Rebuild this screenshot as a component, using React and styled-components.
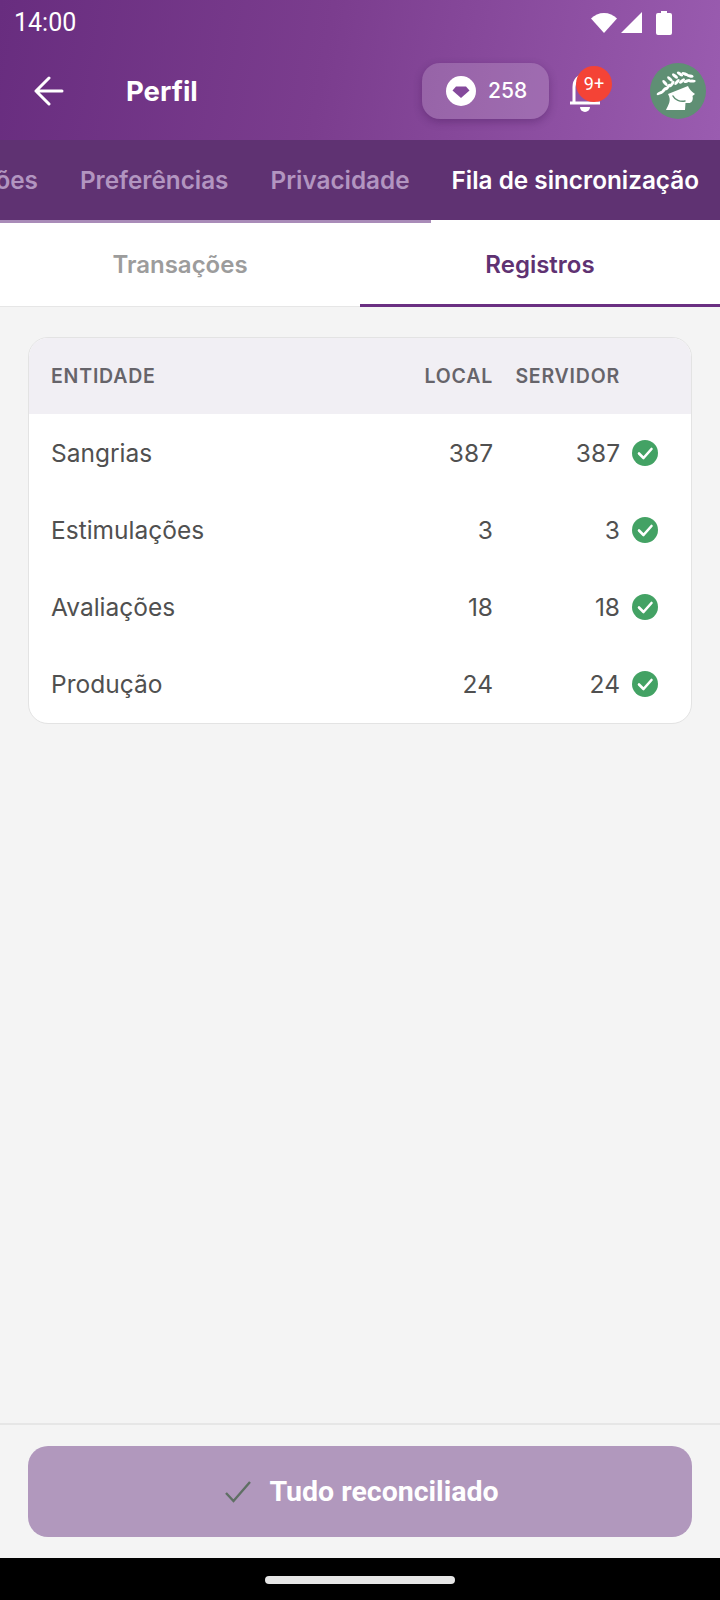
import React from 'react';
import styled, { createGlobalStyle } from 'styled-components';

const GlobalStyle = createGlobalStyle`
  html, body { margin: 0; padding: 0; background: #f4f4f4; }
  * { box-sizing: border-box; }
`;

const mainFont = `Inter, "Noto Sans", sans-serif`;

const Page = styled.div`
  width: 720px;
  height: 1600px;
  display: flex;
  flex-direction: column;
  background: #f4f4f4;
  font-family: ${mainFont};
  overflow: hidden;
`;

const TopArea = styled.header`
  height: 140px;
  background: linear-gradient(100deg, #682d7f 0%, #7b3d8e 45%, #9a5cb0 100%);
  display: flex;
  flex-direction: column;
`;

const StatusBar = styled.div`
  height: 45px;
  padding: 0 48px 0 14px;
  display: flex;
  align-items: center;
  color: #fff;
  font: 400 25px Roboto, sans-serif;
`;

const StatusIcons = styled.div`
  margin-left: auto;
  display: flex;
  align-items: center;
  gap: 3px;
`;

const AppBar = styled.div`
  flex: 1;
  display: flex;
  align-items: center;
  padding: 0 14px 4px 34px;
`;

const Title = styled.h1`
  margin: 0 0 0 62px;
  font-size: 27.500px;
  font-weight: 700;
  color: #fff;
`;

const Points = styled.div`
  margin-left: auto;
  width: 127px;
  height: 56px;
  border-radius: 18px;
  background: rgba(255, 255, 255, 0.17);
  box-shadow: 0 3px 8px rgba(50, 10, 70, 0.3);
  display: flex;
  align-items: center;
  gap: 12px;
  padding-left: 24px;
  color: #fff;
  font-size: 21px;
  font-weight: 500;
`;

const BellWrap = styled.div`
  position: relative;
  width: 32px;
  height: 40px;
  margin-left: 20px;
  margin-right: 1px;
  margin-top: 2px;
`;

const Badge = styled.span`
  position: absolute;
  left: 7px;
  top: -6px;
  width: 36px;
  height: 36px;
  border-radius: 50%;
  background: #f44336;
  color: #fff;
  font: 400 18px Roboto, sans-serif;
  display: flex;
  align-items: center;
  justify-content: center;
`;

const Avatar = styled.div`
  width: 56px;
  height: 56px;
  margin-left: 48px;
  border-radius: 50%;
  background: #5f8f74;
  overflow: hidden;
`;

const TabBar = styled.nav`
  height: 83px;
  background: #5f3272;
  display: flex;
  justify-content: flex-end;
  overflow: hidden;
`;

const TabItem = styled.div`
  flex: none;
  padding: 0 21px;
  display: flex;
  align-items: center;
  font-size: 24.300px;
  font-weight: 600;
  white-space: nowrap;
  color: ${p => (p.$active ? '#fff' : '#b295c0')};
  border-bottom: 3px solid ${p => (p.$active ? '#fff' : '#a98bb8')};
`;

const SubTabs = styled.div`
  height: 84px;
  background: #fff;
  display: grid;
  grid-template-columns: 1fr 1fr;
  border-bottom: 1px solid #e6e6e6;
`;

const SubTab = styled.div`
  display: flex;
  align-items: center;
  justify-content: center;
  padding-top: 2px;
  font-size: 24px;
  font-weight: 600;
  color: ${p => (p.$active ? '#5f3272' : '#9c9c9c')};
  border-bottom: 3px solid ${p => (p.$active ? '#6a2f82' : 'transparent')};
  margin-bottom: -1px;
`;

const Content = styled.main`
  flex: 1;
  padding: 30px 28px 0;
`;

const Card = styled.section`
  border: 1px solid #e3e3e3;
  border-radius: 20px;
  background: #fff;
  overflow: hidden;
  padding-bottom: 1px;
`;

const Row = styled.div`
  height: ${p => (p.$head ? '76px' : '77px')};
  display: grid;
  grid-template-columns: 1fr 90px 127px 38px;
  align-items: center;
  padding: 0 33px 0 22px;
  background: ${p => (p.$head ? '#f1eff4' : 'transparent')};
  color: ${p => (p.$head ? '#66646a' : '#505050')};
  font-size: ${p => (p.$head ? '19.500px' : '24.500px')};
  font-weight: ${p => (p.$head ? 600 : 400)};
  letter-spacing: ${p => (p.$head ? '0.8px' : '0')};
`;

const Num = styled.span`
  text-align: right;
`;

const CheckCell = styled.span`
  display: flex;
  justify-content: flex-end;
`;

const Footer = styled.footer`
  height: 135px;
  border-top: 2px solid #e6e6e6;
  padding: 21px 28px 0;
`;

const DoneButton = styled.button`
  width: 100%;
  height: 91px;
  border: none;
  border-radius: 20px;
  padding: 0 0 0 4px;
  background: #b198bd;
  color: #fff;
  font: 700 28.500px Roboto, sans-serif;
  display: flex;
  align-items: center;
  justify-content: center;
  gap: 18px;
`;

const NavBar = styled.div`
  height: 42px;
  background: #000;
  display: flex;
  justify-content: center;
  padding-top: 18px;
`;

const HomePill = styled.div`
  width: 190px;
  height: 8px;
  border-radius: 4px;
  background: #e6e6e6;
`;

const BatteryIcon = styled.svg`
  margin-left: 10px;
`;

const Wifi = () => (
  <svg width="28" height="22" viewBox="0 0 28 22">
    <path d="M1 6.500C4.500 3 9 1 14 1s9.500 2 13 5.500L14 21z" fill="#fff" />
  </svg>
);

const Signal = () => (
  <svg width="22" height="22" viewBox="0 0 22 22">
    <path d="M21 0v21H0z" fill="#fff" />
  </svg>
);

const Battery = () => (
  <BatteryIcon width="16" height="24" viewBox="0 0 16 24">
    <path d="M5 0h6v2h3a2 2 0 0 1 2 2v18a2 2 0 0 1-2 2H2a2 2 0 0 1-2-2V4a2 2 0 0 1 2-2h3z" fill="#fff" />
  </BatteryIcon>
);

const BackArrow = () => (
  <svg width="30" height="30" viewBox="0 0 30 30" fill="none" stroke="#fff" strokeWidth="3" strokeLinecap="round" strokeLinejoin="round">
    <path d="M28 15H2M15 2L2 15l13 13" />
  </svg>
);

const Gem = () => (
  <svg width="30" height="30" viewBox="0 0 30 30">
    <circle cx="15" cy="15" r="15" fill="#fff" />
    <path d="M10 10.500h10l3.500 4L15 22l-8.500-7.500z" fill="#84499b" />
  </svg>
);

const Bell = () => (
  <svg width="32" height="40" viewBox="0 0 32 40" fill="none" stroke="#fff" strokeWidth="3" strokeLinejoin="round">
    <path d="M1 31h30M5 31V15C5 8 10 3 16 3s11 5 11 12v16" />
    <path d="M11 35a5 5 0 0 0 10 0z" fill="#fff" stroke="none" />
  </svg>
);

// laurel wreath leaves: x, y, rotation
const leaves = [
  [10, 30, -25], [14, 27, -50], [18, 24, -55], [22, 21, -55], [27, 19, -50], [32, 18, -40], [37, 18, -20], [42, 18, 0],
  [15, 20, 50], [20, 16, 45], [25, 13, 40], [30, 11, 35], [35, 11, 20], [40, 13, 10],
];

const Caesar = () => (
  <svg width="56" height="56" viewBox="0 0 56 56">
    <path
      d="M18 31L38 23c1 3 3 5 7 8l-2.500 2c.5 2 .5 4-1 6-2 1.500-4 1-6 1l-.5 7H16c2-5 6-9 2-16z"
      fill="#fff"
    />
    <path d="M23 33c2 4 7 6 12 5" fill="none" stroke="#5f8f74" strokeWidth="1.500" strokeLinecap="round" />
    {leaves.map(([x, y, r], i) => (
      <ellipse key={i} cx={x} cy={y} rx="3.600" ry="1.500" fill="#fff" transform={`rotate(${r} ${x} ${y})`} />
    ))}
  </svg>
);

const GreenCheck = () => (
  <svg width="26" height="26" viewBox="0 0 26 26">
    <circle cx="13" cy="13" r="13" fill="#43a264" />
    <path d="M7 13.500l4.500 4.500L19.500 9" fill="none" stroke="#fff" strokeWidth="2.600" strokeLinecap="round" strokeLinejoin="round" />
  </svg>
);

const ThinCheck = () => (
  <svg width="26" height="22" viewBox="0 0 26 22" fill="none" stroke="#5f6f64" strokeWidth="2.400">
    <path d="M1 12l7.500 8L25 1" />
  </svg>
);

const records = [
  { name: 'Sangrias', local: 387, server: 387 },
  { name: 'Estimulações', local: 3, server: 3 },
  { name: 'Avaliações', local: 18, server: 18 },
  { name: 'Produção', local: 24, server: 24 },
];

const App = () => (
  <Page>
    <GlobalStyle />
    <TopArea>
      <StatusBar>
        14:00
        <StatusIcons>
          <Wifi />
          <Signal />
          <Battery />
        </StatusIcons>
      </StatusBar>
      <AppBar>
        <BackArrow />
        <Title>Perfil</Title>
        <Points>
          <Gem />
          258
        </Points>
        <BellWrap>
          <Bell />
          <Badge>9+</Badge>
        </BellWrap>
        <Avatar>
          <Caesar />
        </Avatar>
      </AppBar>
    </TopArea>
    <TabBar>
      <TabItem>Notificações</TabItem>
      <TabItem>Preferências</TabItem>
      <TabItem>Privacidade</TabItem>
      <TabItem $active>Fila de sincronização</TabItem>
    </TabBar>
    <SubTabs>
      <SubTab>Transações</SubTab>
      <SubTab $active>Registros</SubTab>
    </SubTabs>
    <Content>
      <Card>
        <Row $head>
          <span>ENTIDADE</span>
          <Num>LOCAL</Num>
          <Num>SERVIDOR</Num>
          <span />
        </Row>
        {records.map(r => (
          <Row key={r.name}>
            <span>{r.name}</span>
            <Num>{r.local}</Num>
            <Num>{r.server}</Num>
            <CheckCell>
              <GreenCheck />
            </CheckCell>
          </Row>
        ))}
      </Card>
    </Content>
    <Footer>
      <DoneButton>
        <ThinCheck />
        Tudo reconciliado
      </DoneButton>
    </Footer>
    <NavBar>
      <HomePill />
    </NavBar>
  </Page>
);

export default App;
